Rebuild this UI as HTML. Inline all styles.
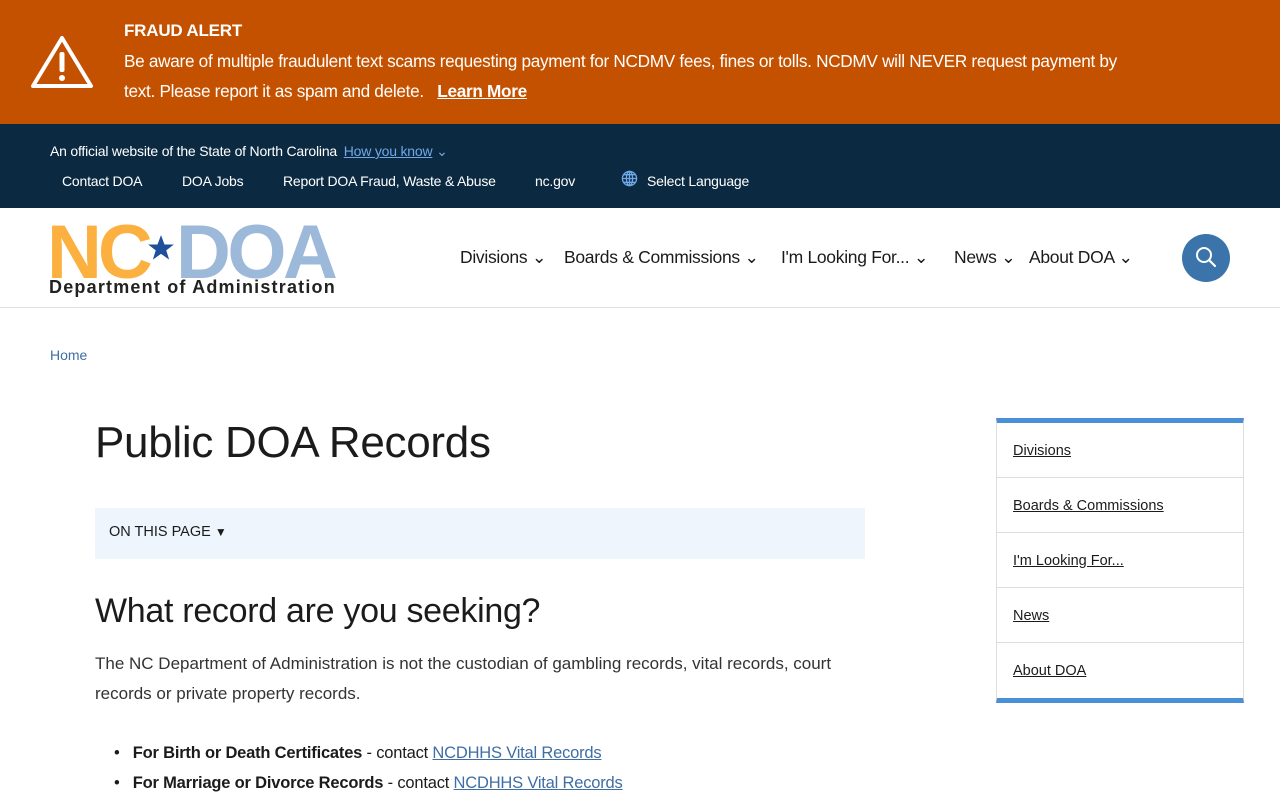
<!DOCTYPE html>
<html><head><meta charset="utf-8"><style>
*{margin:0;padding:0;box-sizing:border-box}
body{width:1280px;height:800px;overflow:hidden;background:#fff;font-family:"Liberation Sans",sans-serif;color:#1b1b1b;position:relative}
.a{position:absolute;white-space:nowrap}
.alert{position:absolute;left:0;top:0;width:1280px;height:124px;background:#c45100;color:#fff}
.top{position:absolute;left:0;top:124px;width:1280px;height:84px;background:#0b2a42;color:#fff}
.hdr{position:absolute;left:0;top:208px;width:1280px;height:100px;border-bottom:1px solid #e2e2e2}
.nav span{font-size:17.5px;color:#1b1b1b;letter-spacing:-0.3px}
a{color:#3f6ea4}
.side{position:absolute;left:996px;top:418px;width:248px;height:285px;border:1px solid #ddd;border-top:5px solid #4a90d9;border-bottom:5px solid #4a90d9}
.side div{height:55px;border-bottom:1px solid #ddd;padding-left:16px;line-height:57px;font-size:14.5px;letter-spacing:0px}
.side div:last-child{border-bottom:none}
.side a{color:#1b1b1b}
.t{font-size:14px;letter-spacing:-0.2px}
</style></head><body>
<div class="alert">
<svg class="a" style="left:30px;top:34px" width="64" height="56" viewBox="0 0 64 56"><path d="M32 4 L61 52 L3 52 Z" fill="none" stroke="#fff" stroke-width="4" stroke-linejoin="round"/><rect x="29.5" y="18" width="5" height="20" rx="2" fill="#fff"/><circle cx="32" cy="44" r="3" fill="#fff"/></svg>
<div class="a" style="left:124px;top:21px;font-size:17px;font-weight:bold;letter-spacing:-0.2px">FRAUD ALERT</div>
<div class="a" style="left:124px;top:51px;font-size:17.2px;letter-spacing:-0.3px">Be aware of multiple fraudulent text scams requesting payment for NCDMV fees, fines or tolls. NCDMV will NEVER request payment by</div>
<div class="a" style="left:124px;top:81px;font-size:17.2px;letter-spacing:-0.3px">text. Please report it as spam and delete. &nbsp; <b style="text-decoration:underline">Learn More</b></div>
</div>
<div class="top">
<div class="a t" style="left:50px;top:19px">An official website of the State of North Carolina <span style="color:#6fa7e8;text-decoration:underline;margin-left:3px">How you know</span> <span style="color:#6fa7e8">&#8964;</span></div>
<div class="a t" style="left:62px;top:49px">Contact DOA</div>
<div class="a t" style="left:182px;top:49px">DOA Jobs</div>
<div class="a t" style="left:283px;top:49px">Report DOA Fraud, Waste &amp; Abuse</div>
<div class="a t" style="left:535px;top:49px">nc.gov</div>
<svg class="a" style="left:621px;top:46px" width="17" height="17" viewBox="0 0 18 18"><g fill="none" stroke="#6fa7e8" stroke-width="1.4"><circle cx="9" cy="9" r="7.5"/><ellipse cx="9" cy="9" rx="3.3" ry="7.5"/><path d="M1.5 9h15M2.5 5h13M2.5 13h13M9 1.5v15"/></g></svg>
<div class="a t" style="left:647px;top:49px">Select Language</div>
</div>
<div class="hdr">
<div class="a" style="left:47px;top:5px;font-size:76px;font-weight:bold;letter-spacing:-4px;color:#fbb040;line-height:80px">NC</div>
<svg class="a" style="left:147px;top:26px" width="28" height="28" viewBox="0 0 24 24"><path d="M12 1l3 8h8l-6.5 5 2.5 8-7-5-7 5 2.5-8L1 9h8z" fill="#1f4e9a"/></svg>
<div class="a" style="left:176px;top:5px;font-size:76px;font-weight:bold;letter-spacing:-3.5px;color:#9db9d9;line-height:80px">DOA</div>
<div class="a" style="left:49px;top:69px;font-size:18px;font-weight:bold;color:#222;letter-spacing:1.2px">Department of Administration</div>
<div class="nav">
<span class="a" style="left:460px;top:39px">Divisions &#8964;</span>
<span class="a" style="left:564px;top:39px">Boards &amp; Commissions &#8964;</span>
<span class="a" style="left:781px;top:39px">I'm Looking For... &#8964;</span>
<span class="a" style="left:954px;top:39px">News &#8964;</span>
<span class="a" style="left:1029px;top:39px">About DOA &#8964;</span>
</div>
<div class="a" style="left:1182px;top:26px;width:48px;height:48px;border-radius:50%;background:#3b74ab"></div>
<svg class="a" style="left:1194px;top:37px" width="24" height="24" viewBox="0 0 24 24"><circle cx="10" cy="10" r="7" fill="none" stroke="#fff" stroke-width="2"/><path d="M15 15l6 6" stroke="#fff" stroke-width="2.2" stroke-linecap="round"/></svg>
</div>
<div class="a" style="left:50px;top:347px;font-size:14px;color:#3f6ea4">Home</div>
<div class="a" style="left:95px;top:418px;font-size:44px;color:#1b1b1b;letter-spacing:-0.3px">Public DOA Records</div>
<div class="a" style="left:95px;top:508px;width:770px;height:51px;background:#eef5fd"></div>
<div class="a" style="left:109px;top:524px;font-size:14.5px">ON THIS PAGE <span style="font-size:12px">&#9660;</span></div>
<div class="a" style="left:95px;top:592px;font-size:34px;letter-spacing:-0.3px">What record are you seeking?</div>
<div class="a" style="left:95px;top:654px;font-size:17px;letter-spacing:0px;color:#333">The NC Department of Administration is not the custodian of gambling records, vital records, court</div>
<div class="a" style="left:95px;top:684px;font-size:17px;letter-spacing:0px;color:#333">records or private property records.</div>
<div class="a" style="left:114px;top:744px;font-size:16.5px;letter-spacing:-0.2px">•&nbsp;&nbsp;&nbsp;<b>For Birth or Death Certificates</b> - contact <a href="#">NCDHHS Vital Records</a></div>
<div class="a" style="left:114px;top:774px;font-size:16.5px;letter-spacing:-0.2px">•&nbsp;&nbsp;&nbsp;<b>For Marriage or Divorce Records</b> - contact <a href="#">NCDHHS Vital Records</a></div>
<div class="side">
<div><a href="#">Divisions</a></div>
<div><a href="#">Boards &amp; Commissions</a></div>
<div><a href="#">I'm Looking For...</a></div>
<div><a href="#">News</a></div>
<div><a href="#">About DOA</a></div>
</div>
</body></html>
